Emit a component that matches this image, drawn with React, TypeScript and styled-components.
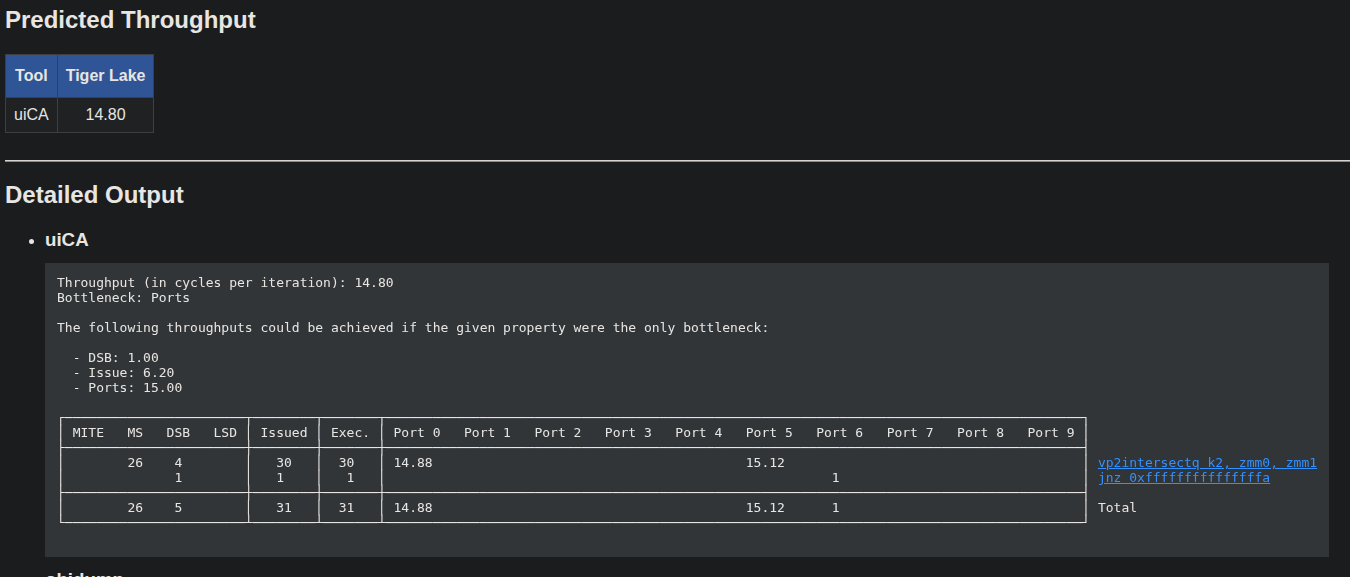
import React from 'react'
import styled, { createGlobalStyle } from 'styled-components'

const GlobalStyle = createGlobalStyle`
  html, body {
    margin: 0;
    padding: 0;
    background: #1b1c1e;
  }
  body {
    padding: 0 0 0 5px;
    color: #e8e6e3;
    font-family: 'Liberation Sans', Arial, sans-serif;
    font-size: 16px;
  }
`

const Heading = styled.h2`
  font-size: 24px;
  font-weight: bold;
  margin: 6px 0 20px;
  line-height: normal;
`

const SummaryTable = styled.table`
  border-collapse: collapse;
  margin: 0;
`

const HeadCell = styled.th`
  background: #2f5597;
  color: #e8e6e3;
  border: 1px solid #3c4043;
  padding: 12px 8px;
  font-weight: bold;
  text-align: center;
`

const Cell = styled.td<{ $center?: boolean }>`
  background: #1f2123;
  border: 1px solid #3c4043;
  padding: 8px;
  text-align: ${({ $center }) => ($center ? 'center' : 'left')};
`

const Rule = styled.hr`
  margin: 27px 0 0;
  border: none;
  border-top: 1px solid #d6d3cf;
  border-bottom: 1px solid #8c8a86;
  height: 0;
  & + h2 {
    margin-top: 19px;
  }
`

const ToolList = styled.ul`
  margin: 0;
  padding-left: 40px;
`

const ToolItem = styled.li`
  list-style: disc;
`

const ToolName = styled.h3`
  font-size: 18.72px;
  font-weight: bold;
  margin: 0;
  line-height: normal;
`

const Pre = styled.pre`
  margin: 11.5px 0 12.5px;
  padding: 12px;
  width: max-content;
  background: #323538;
  color: #e8e6e3;
  font-family: 'DejaVu Sans Mono', 'Liberation Mono', monospace;
  font-size: 13px;
  line-height: 15px;
  white-space: pre;
  will-change: transform;
`

const AsmLink = styled.a`
  color: #3391ff;
  text-decoration: underline;
`

// width of the ascii table drawn by uiCA, and the columns where a vertical bar sits
const WIDTH = 132
const BARS = [0, 24, 33, 41, 131]

function border(kind: 'top' | 'mid' | 'bot') {
  const [l, m, r] = kind === 'top' ? ['┌', '┬', '┐'] : kind === 'mid' ? ['├', '┼', '┤'] : ['└', '┴', '┘']
  const chars = Array(WIDTH).fill('─')
  BARS.forEach((c, i) => {
    chars[c] = i === 0 ? l : i === BARS.length - 1 ? r : m
  })
  return chars.join('')
}

function row(cells: Array<[number, string]>) {
  const chars = Array(WIDTH).fill(' ')
  BARS.forEach(c => (chars[c] = '│'))
  cells.forEach(([col, text]) => {
    for (let i = 0; i < text.length; i++) chars[col + i] = text[i]
  })
  return chars.join('')
}

const ports = Array.from({ length: 10 }, (_, i) => `Port ${i}`).join('   ')

const header = row([
  [2, 'MITE'],
  [9, 'MS'],
  [14, 'DSB'],
  [20, 'LSD'],
  [26, 'Issued'],
  [35, 'Exec.'],
  [43, ports]
])

const line1 = row([
  [9, '26'],
  [15, '4'],
  [28, '30'],
  [36, '30'],
  [43, '14.88'],
  [88, '15.12']
])

const line2 = row([
  [15, '1'],
  [28, '1'],
  [37, '1'],
  [99, '1']
])

const total = row([
  [9, '26'],
  [15, '5'],
  [28, '31'],
  [36, '31'],
  [43, '14.88'],
  [88, '15.12'],
  [99, '1']
])

const intro = `Throughput (in cycles per iteration): 14.80
Bottleneck: Ports

The following throughputs could be achieved if the given property were the only bottleneck:

  - DSB: 1.00
  - Issue: 6.20
  - Ports: 15.00

`

export default function App() {
  return (
    <>
      <GlobalStyle />
      <Heading>Predicted Throughput</Heading>
      <SummaryTable>
        <thead>
          <tr>
            <HeadCell>Tool</HeadCell>
            <HeadCell>Tiger Lake</HeadCell>
          </tr>
        </thead>
        <tbody>
          <tr>
            <Cell>uiCA</Cell>
            <Cell $center>14.80</Cell>
          </tr>
        </tbody>
      </SummaryTable>
      <Rule />
      <Heading>Detailed Output</Heading>
      <ToolList>
        <ToolItem>
          <ToolName>uiCA</ToolName>
          <Pre>
            {intro}
            {border('top') + '\n'}
            {header + '\n'}
            {border('mid') + '\n'}
            {line1 + ' '}
            <AsmLink href="#">vp2intersectq k2, zmm0, zmm1</AsmLink>
            {'\n' + line2 + ' '}
            <AsmLink href="#">jnz 0xfffffffffffffffa</AsmLink>
            {'\n' + border('mid') + '\n'}
            {total + ' Total\n'}
            {border('bot') + '\n\n'}
          </Pre>
        </ToolItem>
        <ToolItem>
          <ToolName>objdump</ToolName>
        </ToolItem>
      </ToolList>
    </>
  )
}
